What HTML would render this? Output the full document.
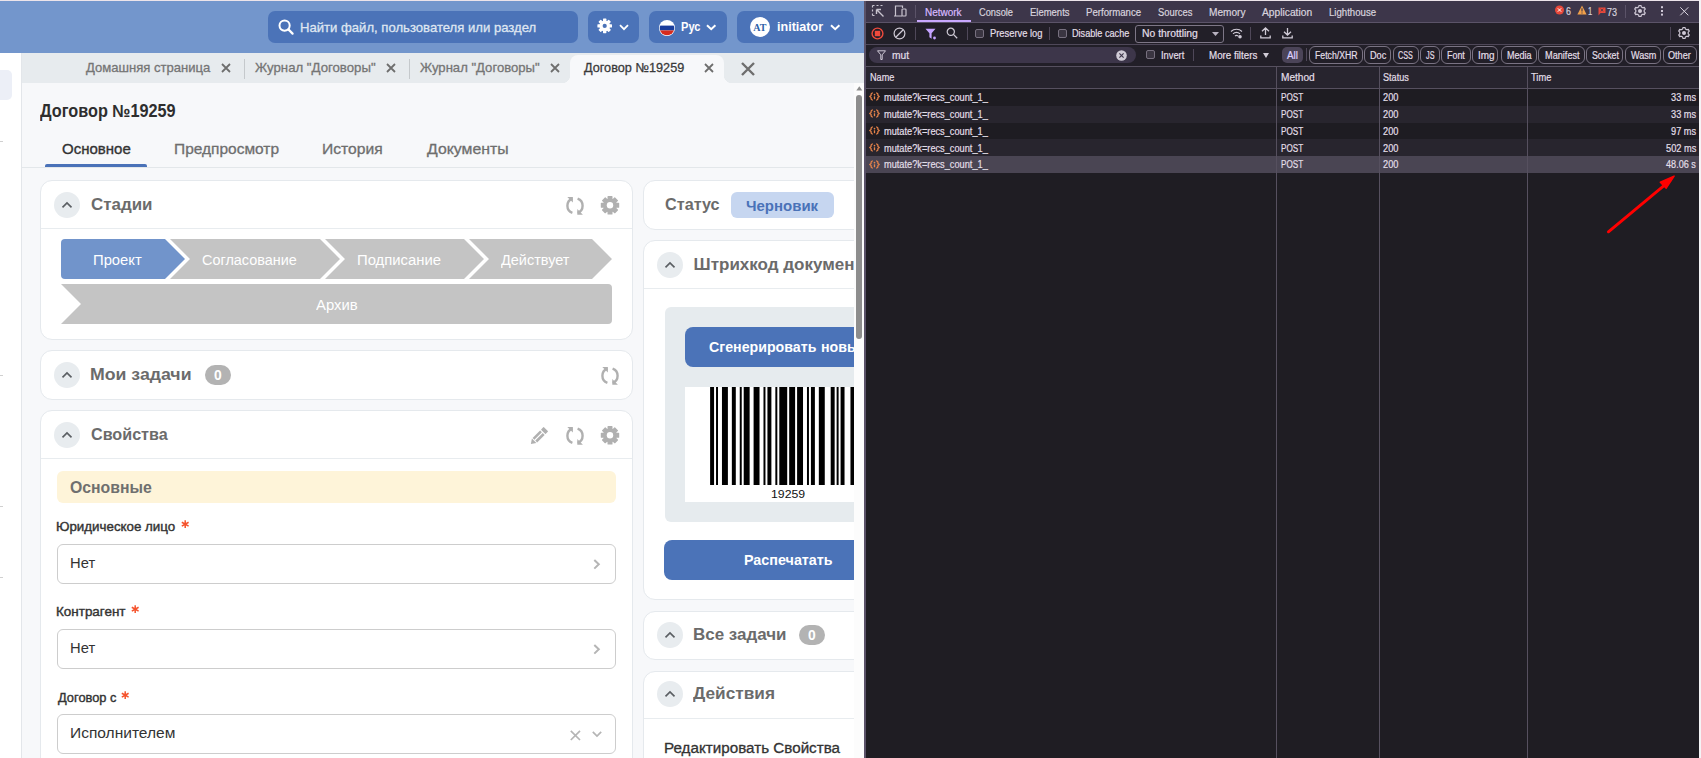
<!DOCTYPE html>
<html><head><meta charset="utf-8"><style>
html,body{margin:0;padding:0;width:1701px;height:758px;overflow:hidden;background:#1f1d24;font-family:"Liberation Sans", sans-serif;}
#root{position:relative;width:1701px;height:758px;overflow:hidden;}
</style></head><body><div id="root">
<div style="position:absolute;left:0px;top:0px;width:864px;height:1px;background:#ece4ea;border-radius:0px;box-sizing:border-box;"></div><div style="position:absolute;left:0px;top:1px;width:864px;height:52px;background:#7396cc;border-radius:0px;box-sizing:border-box;"></div><div style="position:absolute;left:268px;top:11px;width:310px;height:32px;background:#4b73b8;border-radius:7px;box-sizing:border-box;"></div><svg style="position:absolute;left:278px;top:19px;overflow:visible;" width="16" height="16" viewBox="0 0 16 16"><circle cx="6.6" cy="6.6" r="5.1" fill="none" stroke="#fff" stroke-width="2"/><path d="M10.4,10.4 L14.6,14.6" stroke="#fff" stroke-width="2.2" stroke-linecap="round"/></svg><div id="search" style="position:absolute;left:299.53px;top:21.01px;font-size:13.5px;line-height:13.5px;color:#dfe6f1;font-weight:400;letter-spacing:0.000px;white-space:nowrap;-webkit-text-stroke:0.3px #dfe6f1;transform:scaleX(0.9708);transform-origin:0 0;">Найти файл, пользователя или раздел</div><div style="position:absolute;left:588px;top:11px;width:51px;height:32px;background:#4b73b8;border-radius:7px;box-sizing:border-box;"></div><svg style="position:absolute;left:596px;top:17px;overflow:visible;" width="18" height="18" viewBox="0 0 18 18"><circle cx="8.7" cy="8.9" r="5.3" fill="#fff"/><rect x="6.999999999999999" y="1.6000000000000005" width="3.4" height="3.5" rx="0.6" fill="#fff" transform="rotate(0 8.7 8.9)"/><rect x="6.999999999999999" y="1.6000000000000005" width="3.4" height="3.5" rx="0.6" fill="#fff" transform="rotate(45 8.7 8.9)"/><rect x="6.999999999999999" y="1.6000000000000005" width="3.4" height="3.5" rx="0.6" fill="#fff" transform="rotate(90 8.7 8.9)"/><rect x="6.999999999999999" y="1.6000000000000005" width="3.4" height="3.5" rx="0.6" fill="#fff" transform="rotate(135 8.7 8.9)"/><rect x="6.999999999999999" y="1.6000000000000005" width="3.4" height="3.5" rx="0.6" fill="#fff" transform="rotate(180 8.7 8.9)"/><rect x="6.999999999999999" y="1.6000000000000005" width="3.4" height="3.5" rx="0.6" fill="#fff" transform="rotate(225 8.7 8.9)"/><rect x="6.999999999999999" y="1.6000000000000005" width="3.4" height="3.5" rx="0.6" fill="#fff" transform="rotate(270 8.7 8.9)"/><rect x="6.999999999999999" y="1.6000000000000005" width="3.4" height="3.5" rx="0.6" fill="#fff" transform="rotate(315 8.7 8.9)"/><circle cx="8.7" cy="8.9" r="2.1" fill="#4b73b8"/></svg><svg style="position:absolute;left:619px;top:24px;overflow:visible;" width="10" height="7" viewBox="0 0 10 7"><path d="M1,1.2 L5,5.2 L9,1.2" fill="none" stroke="#fff" stroke-width="1.8"/></svg><div style="position:absolute;left:649px;top:11px;width:78px;height:32px;background:#4b73b8;border-radius:7px;box-sizing:border-box;"></div><svg style="position:absolute;left:659px;top:20px;overflow:visible;" width="16" height="16" viewBox="0 0 16 16"><defs><clipPath id="fc"><circle cx="8" cy="8" r="7.3"/></clipPath></defs><circle cx="8" cy="8" r="8" fill="#fff"/><g clip-path="url(#fc)"><rect x="0" y="0" width="16" height="5.6" fill="#fff"/><rect x="0" y="5.6" width="16" height="4.8" fill="#1a3d9c"/><rect x="0" y="10.4" width="16" height="6" fill="#d52b1e"/></g></svg><div id="rus" style="position:absolute;left:681.0px;top:21.01px;font-size:12.5px;line-height:12.5px;color:#fff;font-weight:700;letter-spacing:0.000px;white-space:nowrap;transform:scaleX(0.8872);transform-origin:0 0;">Рус</div><svg style="position:absolute;left:706px;top:24px;overflow:visible;" width="11" height="7" viewBox="0 0 11 7"><path d="M1,1.2 L5.2,5.2 L9.4,1.2" fill="none" stroke="#fff" stroke-width="2"/></svg><div style="position:absolute;left:737px;top:11px;width:117px;height:32px;background:#4b73b8;border-radius:7px;box-sizing:border-box;"></div><div style="position:absolute;left:750px;top:17px;width:20px;height:20px;background:#fff;border-radius:10px;box-sizing:border-box;"></div><div id="at" style="position:absolute;left:753.2px;top:23.00px;font-size:10px;line-height:10px;color:#2d5fa8;font-weight:700;letter-spacing:0.000px;white-space:nowrap;font-family:'Liberation Serif', serif;">AT</div><div id="init" style="position:absolute;left:777.0px;top:20.00px;font-size:13px;line-height:13px;color:#fff;font-weight:700;letter-spacing:0.000px;white-space:nowrap;transform:scaleX(0.9663);transform-origin:0 0;">initiator</div><svg style="position:absolute;left:830px;top:24px;overflow:visible;" width="11" height="7" viewBox="0 0 11 7"><path d="M1,1.2 L5.2,5.2 L9.4,1.2" fill="none" stroke="#fff" stroke-width="2"/></svg><div style="position:absolute;left:0px;top:53px;width:21px;height:705px;background:#fff;border-radius:0px;box-sizing:border-box;"></div><div style="position:absolute;left:21px;top:53px;width:1px;height:705px;background:#e3e6ea;border-radius:0px;box-sizing:border-box;"></div><div style="position:absolute;left:0px;top:70px;width:12px;height:30px;background:#eceff7;border-radius:0 5px 5px 0;box-sizing:border-box;"></div><div style="position:absolute;left:0px;top:141px;width:3px;height:1px;background:#d0d0d0;border-radius:0px;box-sizing:border-box;"></div><div style="position:absolute;left:0px;top:375px;width:3px;height:1px;background:#d0d0d0;border-radius:0px;box-sizing:border-box;"></div><div style="position:absolute;left:0px;top:506px;width:3px;height:1px;background:#d0d0d0;border-radius:0px;box-sizing:border-box;"></div><div style="position:absolute;left:0px;top:577px;width:3px;height:1px;background:#d0d0d0;border-radius:0px;box-sizing:border-box;"></div><div style="position:absolute;left:22px;top:53px;width:842px;height:30px;background:#e7ebee;border-radius:0px;box-sizing:border-box;"></div><div style="position:absolute;left:22px;top:83px;width:832px;height:675px;background:#f7f8fa;border-radius:0px;box-sizing:border-box;"></div><div style="position:absolute;left:570px;top:55px;width:154px;height:28px;background:#f7f8fa;border-radius:8px 8px 0 0;box-sizing:border-box;"></div><div style="position:absolute;left:562px;top:75px;width:8px;height:8px;background:radial-gradient(circle at 0 0, #e7ebee 8px, #f7f8fa 8.5px);border-radius:0px;box-sizing:border-box;"></div><div style="position:absolute;left:724px;top:75px;width:8px;height:8px;background:radial-gradient(circle at 100% 0, #e7ebee 8px, #f7f8fa 8.5px);border-radius:0px;box-sizing:border-box;"></div><div id="tab1" style="position:absolute;left:86.0px;top:61.00px;font-size:13px;line-height:13px;color:#757575;font-weight:400;letter-spacing:0.000px;white-space:nowrap;-webkit-text-stroke:0.3px #757575;transform:scaleX(1.0052);transform-origin:0 0;">Домашняя страница</div><svg style="position:absolute;left:221px;top:63px;overflow:visible;" width="10" height="10" viewBox="0 0 10 10"><path d="M1,1 L9,9 M9,1 L1,9" stroke="#6e6e6e" stroke-width="1.8"/></svg><div style="position:absolute;left:244px;top:59px;width:1px;height:20px;background:#c5c9cc;border-radius:0px;box-sizing:border-box;"></div><div id="tab2" style="position:absolute;left:255.0px;top:61.00px;font-size:13px;line-height:13px;color:#757575;font-weight:400;letter-spacing:0.000px;white-space:nowrap;-webkit-text-stroke:0.3px #757575;transform:scaleX(1.0160);transform-origin:0 0;">Журнал "Договоры"</div><svg style="position:absolute;left:386px;top:63px;overflow:visible;" width="10" height="10" viewBox="0 0 10 10"><path d="M1,1 L9,9 M9,1 L1,9" stroke="#6e6e6e" stroke-width="1.8"/></svg><div style="position:absolute;left:409px;top:59px;width:1px;height:20px;background:#c5c9cc;border-radius:0px;box-sizing:border-box;"></div><div id="tab3" style="position:absolute;left:420.0px;top:61.00px;font-size:13px;line-height:13px;color:#757575;font-weight:400;letter-spacing:0.000px;white-space:nowrap;-webkit-text-stroke:0.3px #757575;transform:scaleX(1.0076);transform-origin:0 0;">Журнал "Договоры"</div><svg style="position:absolute;left:550px;top:63px;overflow:visible;" width="10" height="10" viewBox="0 0 10 10"><path d="M1,1 L9,9 M9,1 L1,9" stroke="#6e6e6e" stroke-width="1.8"/></svg><div id="tab4" style="position:absolute;left:584.0px;top:61.00px;font-size:13px;line-height:13px;color:#3a3a3a;font-weight:400;letter-spacing:0.000px;white-space:nowrap;-webkit-text-stroke:0.3px #3a3a3a;transform:scaleX(0.9750);transform-origin:0 0;">Договор №19259</div><svg style="position:absolute;left:704px;top:63px;overflow:visible;" width="10" height="10" viewBox="0 0 10 10"><path d="M1,1 L9,9 M9,1 L1,9" stroke="#6e6e6e" stroke-width="1.8"/></svg><svg style="position:absolute;left:740.5px;top:61.5px;overflow:visible;" width="14" height="14" viewBox="0 0 14 14"><path d="M1,1 L13,13 M13,1 L1,13" stroke="#6e6e6e" stroke-width="2.4"/></svg><div style="position:absolute;left:854px;top:83px;width:10px;height:675px;background:#fcfcfc;border-radius:0px;box-sizing:border-box;"></div><svg style="position:absolute;left:855.5px;top:85.5px;overflow:visible;" width="7" height="5" viewBox="0 0 7 5"><path d="M0.3,4.5 L3.3,0.3 L6.3,4.5 Z" fill="#8d8d8d"/></svg><div style="position:absolute;left:856px;top:95px;width:6px;height:244px;background:#8d8d8d;border-radius:3px;box-sizing:border-box;"></div><div style="position:absolute;left:0;top:0;width:854px;height:758px;overflow:hidden;"><div id="title" style="position:absolute;left:40.0px;top:103.00px;font-size:17.5px;line-height:17.5px;color:#2e2e2e;font-weight:700;letter-spacing:0.000px;white-space:nowrap;transform:scaleX(0.9288);transform-origin:0 0;">Договор №19259</div><div id="ptab1" style="position:absolute;left:61.6px;top:141.00px;font-size:15px;line-height:15px;color:#333;font-weight:400;letter-spacing:0.000px;white-space:nowrap;-webkit-text-stroke:0.35px #333;transform:scaleX(1.0002);transform-origin:0 0;">Основное</div><div id="ptab2" style="position:absolute;left:174.17px;top:141.00px;font-size:15px;line-height:15px;color:#6e6e6e;font-weight:400;letter-spacing:0.000px;white-space:nowrap;-webkit-text-stroke:0.3px #6e6e6e;transform:scaleX(1.0320);transform-origin:0 0;">Предпросмотр</div><div id="ptab3" style="position:absolute;left:321.96px;top:141.00px;font-size:15px;line-height:15px;color:#6e6e6e;font-weight:400;letter-spacing:0.000px;white-space:nowrap;-webkit-text-stroke:0.3px #6e6e6e;transform:scaleX(1.0430);transform-origin:0 0;">История</div><div id="ptab4" style="position:absolute;left:426.5px;top:141.00px;font-size:15px;line-height:15px;color:#6e6e6e;font-weight:400;letter-spacing:0.000px;white-space:nowrap;-webkit-text-stroke:0.3px #6e6e6e;transform:scaleX(1.0543);transform-origin:0 0;">Документы</div><div style="position:absolute;left:22px;top:167px;width:832px;height:1px;background:#e3e7ea;border-radius:0px;box-sizing:border-box;"></div><div style="position:absolute;left:45px;top:164px;width:102px;height:3px;background:#4a72b8;border-radius:2px 2px 0 0;box-sizing:border-box;"></div><div style="position:absolute;left:40px;top:180px;width:593px;height:160px;background:#fff;border-radius:12px;box-sizing:border-box;border:1px solid #e5e9ed;"></div><div style="position:absolute;left:54px;top:192px;width:26px;height:26px;background:#e8ecef;border-radius:13px;box-sizing:border-box;"></div><svg style="position:absolute;left:61px;top:201px;overflow:visible;" width="12" height="8" viewBox="0 0 12 8"><path d="M1.5,6.3 L6,2 L10.5,6.3" fill="none" stroke="#5b5f63" stroke-width="1.7"/></svg><div id="st_t" style="position:absolute;left:90.6px;top:196.01px;font-size:17px;line-height:17px;color:#6b6b6b;font-weight:700;letter-spacing:0.000px;white-space:nowrap;transform:scaleX(0.9951);transform-origin:0 0;">Стадии</div><svg style="position:absolute;left:565px;top:196px" width="20" height="20" viewBox="0 0 20 20"><path d="M7.4,2.66 A7.6,7.6 0 0 0 7.4,16.94" fill="none" stroke="#b0b0b0" stroke-width="2.4"/><path d="M12.6,2.66 A7.6,7.6 0 0 1 12.6,16.94" fill="none" stroke="#b0b0b0" stroke-width="2.4"/><path d="M2.3,1 L7.9,1 L7.9,6.6 Z" fill="#b0b0b0"/><path d="M12.3,18.7 L17.9,18.7 L12.3,13.1 Z" fill="#b0b0b0"/></svg><svg style="position:absolute;left:600px;top:195px;overflow:visible;" width="20" height="20" viewBox="0 0 20 20"><circle cx="10" cy="10.3" r="6.9" fill="#b0b0b0"/><rect x="7.5" y="1.1000000000000014" width="5" height="3.799999999999999" rx="0.6" fill="#b0b0b0" transform="rotate(0 10 10.3)"/><rect x="7.5" y="1.1000000000000014" width="5" height="3.799999999999999" rx="0.6" fill="#b0b0b0" transform="rotate(45 10 10.3)"/><rect x="7.5" y="1.1000000000000014" width="5" height="3.799999999999999" rx="0.6" fill="#b0b0b0" transform="rotate(90 10 10.3)"/><rect x="7.5" y="1.1000000000000014" width="5" height="3.799999999999999" rx="0.6" fill="#b0b0b0" transform="rotate(135 10 10.3)"/><rect x="7.5" y="1.1000000000000014" width="5" height="3.799999999999999" rx="0.6" fill="#b0b0b0" transform="rotate(180 10 10.3)"/><rect x="7.5" y="1.1000000000000014" width="5" height="3.799999999999999" rx="0.6" fill="#b0b0b0" transform="rotate(225 10 10.3)"/><rect x="7.5" y="1.1000000000000014" width="5" height="3.799999999999999" rx="0.6" fill="#b0b0b0" transform="rotate(270 10 10.3)"/><rect x="7.5" y="1.1000000000000014" width="5" height="3.799999999999999" rx="0.6" fill="#b0b0b0" transform="rotate(315 10 10.3)"/><circle cx="10" cy="10.3" r="3.2" fill="#fff"/></svg><div style="position:absolute;left:41px;top:228px;width:591px;height:1px;background:#e8ecef;border-radius:0px;box-sizing:border-box;"></div><svg style="position:absolute;left:0px;top:0px;overflow:visible;" width="854" height="340" viewBox="0 0 854 340"><path d="M65,239 L165,239 L185,259 L165,279 L65,279 Q61,279 61,275 L61,243 Q61,239 65,239 Z" fill="#7194cb"/><polygon points="170,239 320,239 340,259 320,279 170,279 190,259" fill="#c4c4c4"/><polygon points="325,239 464,239 484,259 464,279 325,279 345,259" fill="#c4c4c4"/><polygon points="469,239 592,239 612,259 592,279 469,279 489,259" fill="#c4c4c4"/><path d="M61,284 L608,284 Q612,284 612,288 L612,320 Q612,324 608,324 L61,324 L81,304 Z" fill="#c4c4c4"/></svg><div id="s1" style="position:absolute;left:92.64px;top:253.01px;font-size:14px;line-height:14px;color:#fff;font-weight:400;letter-spacing:0.000px;white-space:nowrap;transform:scaleX(1.0568);transform-origin:0 0;">Проект</div><div id="s2" style="position:absolute;left:202.0px;top:253.01px;font-size:14px;line-height:14px;color:#fff;font-weight:400;letter-spacing:0.000px;white-space:nowrap;transform:scaleX(1.0302);transform-origin:0 0;">Согласование</div><div id="s3" style="position:absolute;left:356.74px;top:253.01px;font-size:14px;line-height:14px;color:#fff;font-weight:400;letter-spacing:0.000px;white-space:nowrap;transform:scaleX(1.0606);transform-origin:0 0;">Подписание</div><div id="s4" style="position:absolute;left:501.0px;top:253.01px;font-size:14px;line-height:14px;color:#fff;font-weight:400;letter-spacing:0.000px;white-space:nowrap;transform:scaleX(1.0330);transform-origin:0 0;">Действует</div><div id="s5" style="position:absolute;left:316.0px;top:298.01px;font-size:14px;line-height:14px;color:#fff;font-weight:400;letter-spacing:0.000px;white-space:nowrap;transform:scaleX(1.0622);transform-origin:0 0;">Архив</div><div style="position:absolute;left:40px;top:350px;width:593px;height:50px;background:#fff;border-radius:12px;box-sizing:border-box;border:1px solid #e5e9ed;"></div><div style="position:absolute;left:54px;top:362px;width:26px;height:26px;background:#e8ecef;border-radius:13px;box-sizing:border-box;"></div><svg style="position:absolute;left:61px;top:371px;overflow:visible;" width="12" height="8" viewBox="0 0 12 8"><path d="M1.5,6.3 L6,2 L10.5,6.3" fill="none" stroke="#5b5f63" stroke-width="1.7"/></svg><div id="mt_t" style="position:absolute;left:89.66px;top:366.00px;font-size:17px;line-height:17px;color:#6b6b6b;font-weight:700;letter-spacing:0.000px;white-space:nowrap;transform:scaleX(1.0407);transform-origin:0 0;">Мои задачи</div><div style="position:absolute;left:205px;top:365px;width:26px;height:20px;background:#b3b3b3;border-radius:10px;box-sizing:border-box;"></div><div id="b1" style="position:absolute;left:213.6px;top:368.01px;font-size:14px;line-height:14px;color:#fff;font-weight:700;letter-spacing:0.000px;white-space:nowrap;transform:scaleX(0.9875);transform-origin:0 0;">0</div><svg style="position:absolute;left:600px;top:366px" width="20" height="20" viewBox="0 0 20 20"><path d="M7.4,2.66 A7.6,7.6 0 0 0 7.4,16.94" fill="none" stroke="#b0b0b0" stroke-width="2.4"/><path d="M12.6,2.66 A7.6,7.6 0 0 1 12.6,16.94" fill="none" stroke="#b0b0b0" stroke-width="2.4"/><path d="M2.3,1 L7.9,1 L7.9,6.6 Z" fill="#b0b0b0"/><path d="M12.3,18.7 L17.9,18.7 L12.3,13.1 Z" fill="#b0b0b0"/></svg><div style="position:absolute;left:40px;top:410px;width:593px;height:400px;background:#fff;border-radius:12px;box-sizing:border-box;border:1px solid #e5e9ed;"></div><div style="position:absolute;left:54px;top:422px;width:26px;height:26px;background:#e8ecef;border-radius:13px;box-sizing:border-box;"></div><svg style="position:absolute;left:61px;top:431px;overflow:visible;" width="12" height="8" viewBox="0 0 12 8"><path d="M1.5,6.3 L6,2 L10.5,6.3" fill="none" stroke="#5b5f63" stroke-width="1.7"/></svg><div id="pr_t" style="position:absolute;left:90.7px;top:426.00px;font-size:17px;line-height:17px;color:#6b6b6b;font-weight:700;letter-spacing:0.000px;white-space:nowrap;transform:scaleX(0.9490);transform-origin:0 0;">Свойства</div><svg style="position:absolute;left:0;top:0;overflow:visible" width="1" height="1"><g transform="translate(530.9,444.1) rotate(-45)" fill="#b0b0b0"><path d="M0,0 L4.6,-3.2 L4.6,3.2 Z"/><rect x="5.6" y="-3.2" width="10.6" height="2.55"/><rect x="5.6" y="0.65" width="10.6" height="2.55"/><rect x="17.4" y="-3.2" width="3.8" height="6.4" rx="0.5"/></g></svg><svg style="position:absolute;left:565px;top:426px" width="20" height="20" viewBox="0 0 20 20"><path d="M7.4,2.66 A7.6,7.6 0 0 0 7.4,16.94" fill="none" stroke="#b0b0b0" stroke-width="2.4"/><path d="M12.6,2.66 A7.6,7.6 0 0 1 12.6,16.94" fill="none" stroke="#b0b0b0" stroke-width="2.4"/><path d="M2.3,1 L7.9,1 L7.9,6.6 Z" fill="#b0b0b0"/><path d="M12.3,18.7 L17.9,18.7 L12.3,13.1 Z" fill="#b0b0b0"/></svg><svg style="position:absolute;left:600px;top:425px;overflow:visible;" width="20" height="20" viewBox="0 0 20 20"><circle cx="10" cy="10.3" r="6.9" fill="#b0b0b0"/><rect x="7.5" y="1.1000000000000014" width="5" height="3.799999999999999" rx="0.6" fill="#b0b0b0" transform="rotate(0 10 10.3)"/><rect x="7.5" y="1.1000000000000014" width="5" height="3.799999999999999" rx="0.6" fill="#b0b0b0" transform="rotate(45 10 10.3)"/><rect x="7.5" y="1.1000000000000014" width="5" height="3.799999999999999" rx="0.6" fill="#b0b0b0" transform="rotate(90 10 10.3)"/><rect x="7.5" y="1.1000000000000014" width="5" height="3.799999999999999" rx="0.6" fill="#b0b0b0" transform="rotate(135 10 10.3)"/><rect x="7.5" y="1.1000000000000014" width="5" height="3.799999999999999" rx="0.6" fill="#b0b0b0" transform="rotate(180 10 10.3)"/><rect x="7.5" y="1.1000000000000014" width="5" height="3.799999999999999" rx="0.6" fill="#b0b0b0" transform="rotate(225 10 10.3)"/><rect x="7.5" y="1.1000000000000014" width="5" height="3.799999999999999" rx="0.6" fill="#b0b0b0" transform="rotate(270 10 10.3)"/><rect x="7.5" y="1.1000000000000014" width="5" height="3.799999999999999" rx="0.6" fill="#b0b0b0" transform="rotate(315 10 10.3)"/><circle cx="10" cy="10.3" r="3.2" fill="#fff"/></svg><div style="position:absolute;left:41px;top:458px;width:591px;height:1px;background:#e8ecef;border-radius:0px;box-sizing:border-box;"></div><div style="position:absolute;left:57px;top:471px;width:559px;height:32px;background:#fef4d9;border-radius:6px;box-sizing:border-box;"></div><div id="osn" style="position:absolute;left:69.6px;top:480.00px;font-size:16px;line-height:16px;color:#6f6f6f;font-weight:700;letter-spacing:0.000px;white-space:nowrap;transform:scaleX(0.9874);transform-origin:0 0;">Основные</div><div id="lab_544" style="position:absolute;left:56.48px;top:520.00px;font-size:13px;line-height:13px;color:#333;font-weight:400;letter-spacing:0.000px;white-space:nowrap;-webkit-text-stroke:0.4px #333;transform:scaleX(1.0250);transform-origin:0 0;">Юридическое лицо</div><svg style="position:absolute;left:180.5px;top:519.7px;overflow:visible;" width="9" height="9" viewBox="0 0 9 9"><path d="M4.2,0.3 V8.1 M0.8,2.25 L7.6,6.15 M7.6,2.25 L0.8,6.15" stroke="#f5532d" stroke-width="1.5"/></svg><div style="position:absolute;left:57px;top:544px;width:559px;height:40px;background:#fff;border-radius:6px;box-sizing:border-box;border:1px solid #cdcdcd;"></div><div id="val_544" style="position:absolute;left:69.61999999999999px;top:555.00px;font-size:15px;line-height:15px;color:#333;font-weight:400;letter-spacing:0.000px;white-space:nowrap;transform:scaleX(0.9847);transform-origin:0 0;">Нет</div><svg style="position:absolute;left:593px;top:559px;overflow:visible;" width="8" height="11" viewBox="0 0 8 11"><path d="M1.3,1 L5.8,5.3 L1.3,9.6" fill="none" stroke="#b5b5b5" stroke-width="2"/></svg><div id="lab_629" style="position:absolute;left:56.47px;top:605.01px;font-size:13px;line-height:13px;color:#333;font-weight:400;letter-spacing:0.000px;white-space:nowrap;-webkit-text-stroke:0.4px #333;transform:scaleX(1.0338);transform-origin:0 0;">Контрагент</div><svg style="position:absolute;left:131.4px;top:604.9000000000001px;overflow:visible;" width="9" height="9" viewBox="0 0 9 9"><path d="M4.2,0.3 V8.1 M0.8,2.25 L7.6,6.15 M7.6,2.25 L0.8,6.15" stroke="#f5532d" stroke-width="1.5"/></svg><div style="position:absolute;left:57px;top:629px;width:559px;height:40px;background:#fff;border-radius:6px;box-sizing:border-box;border:1px solid #cdcdcd;"></div><div id="val_629" style="position:absolute;left:69.61999999999999px;top:640.00px;font-size:15px;line-height:15px;color:#333;font-weight:400;letter-spacing:0.000px;white-space:nowrap;transform:scaleX(0.9847);transform-origin:0 0;">Нет</div><svg style="position:absolute;left:593px;top:644px;overflow:visible;" width="8" height="11" viewBox="0 0 8 11"><path d="M1.3,1 L5.8,5.3 L1.3,9.6" fill="none" stroke="#b5b5b5" stroke-width="2"/></svg><div id="lab_714" style="position:absolute;left:57.5px;top:691.00px;font-size:13px;line-height:13px;color:#333;font-weight:400;letter-spacing:0.000px;white-space:nowrap;-webkit-text-stroke:0.4px #333;transform:scaleX(0.9883);transform-origin:0 0;">Договор с</div><svg style="position:absolute;left:121px;top:690.7px;overflow:visible;" width="9" height="9" viewBox="0 0 9 9"><path d="M4.2,0.3 V8.1 M0.8,2.25 L7.6,6.15 M7.6,2.25 L0.8,6.15" stroke="#f5532d" stroke-width="1.5"/></svg><div style="position:absolute;left:57px;top:714px;width:559px;height:40px;background:#fff;border-radius:6px;box-sizing:border-box;border:1px solid #cdcdcd;"></div><div id="val_714" style="position:absolute;left:69.55999999999999px;top:725.00px;font-size:15px;line-height:15px;color:#333;font-weight:400;letter-spacing:0.000px;white-space:nowrap;transform:scaleX(1.0351);transform-origin:0 0;">Исполнителем</div><svg style="position:absolute;left:570px;top:730px;overflow:visible;" width="11" height="11" viewBox="0 0 11 11"><path d="M0.8,0.8 L10,10 M10,0.8 L0.8,10" stroke="#b5b5b5" stroke-width="1.7"/></svg><svg style="position:absolute;left:592px;top:731px;overflow:visible;" width="11" height="7" viewBox="0 0 11 7"><path d="M0.8,0.8 L5,5 L9.2,0.8" fill="none" stroke="#b5b5b5" stroke-width="1.7"/></svg><div style="position:absolute;left:643px;top:180px;width:240px;height:50px;background:#fff;border-radius:12px;box-sizing:border-box;border:1px solid #e5e9ed;"></div><div id="stat" style="position:absolute;left:664.7px;top:196.00px;font-size:17px;line-height:17px;color:#6b6b6b;font-weight:700;letter-spacing:0.000px;white-space:nowrap;transform:scaleX(0.9536);transform-origin:0 0;">Статус</div><div style="position:absolute;left:731px;top:192px;width:103px;height:26px;background:#c6d6f0;border-radius:6px;box-sizing:border-box;"></div><div id="cher" style="position:absolute;left:746.4px;top:198.01px;font-size:15px;line-height:15px;color:#4a72b8;font-weight:700;letter-spacing:0.000px;white-space:nowrap;transform:scaleX(0.9985);transform-origin:0 0;">Черновик</div><div style="position:absolute;left:643px;top:240px;width:240px;height:360px;background:#fff;border-radius:12px;box-sizing:border-box;border:1px solid #e5e9ed;"></div><div style="position:absolute;left:657px;top:252px;width:26px;height:26px;background:#e8ecef;border-radius:13px;box-sizing:border-box;"></div><svg style="position:absolute;left:664px;top:261px;overflow:visible;" width="12" height="8" viewBox="0 0 12 8"><path d="M1.5,6.3 L6,2 L10.5,6.3" fill="none" stroke="#5b5f63" stroke-width="1.7"/></svg><div id="bc_t" style="position:absolute;left:693.6px;top:256.00px;font-size:17px;line-height:17px;color:#6b6b6b;font-weight:700;letter-spacing:0.000px;white-space:nowrap;">Штрихкод документа</div><div style="position:absolute;left:644px;top:288px;width:220px;height:1px;background:#e8ecef;border-radius:0px;box-sizing:border-box;"></div><div style="position:absolute;left:665px;top:307px;width:220px;height:215px;background:#e6ebee;border-radius:6px;box-sizing:border-box;"></div><div style="position:absolute;left:685px;top:327px;width:200px;height:40px;background:#4b73b8;border-radius:8px;box-sizing:border-box;"></div><div id="gen" style="position:absolute;left:709.4px;top:339.00px;font-size:15px;line-height:15px;color:#fff;font-weight:700;letter-spacing:0.000px;white-space:nowrap;transform:scaleX(0.9466);transform-origin:0 0;">Сгенерировать</div><div id="gen2" style="position:absolute;left:821.4px;top:339.00px;font-size:15px;line-height:15px;color:#fff;font-weight:700;letter-spacing:0.000px;white-space:nowrap;transform:scaleX(0.9466);transform-origin:0 0;">новый штрихкод</div><div style="position:absolute;left:685px;top:387px;width:200px;height:115px;background:#fff;border-radius:0px;box-sizing:border-box;"></div><svg style="position:absolute;left:0px;top:0px;overflow:visible;" width="854" height="600" viewBox="0 0 854 600"><rect x="710.100" y="387" width="3.954" height="98" fill="#000"/><rect x="716.031" y="387" width="1.977" height="98" fill="#000"/><rect x="721.962" y="387" width="5.931" height="98" fill="#000"/><rect x="731.847" y="387" width="3.954" height="98" fill="#000"/><rect x="739.755" y="387" width="1.977" height="98" fill="#000"/><rect x="743.709" y="387" width="5.931" height="98" fill="#000"/><rect x="753.594" y="387" width="5.931" height="98" fill="#000"/><rect x="763.479" y="387" width="1.977" height="98" fill="#000"/><rect x="767.433" y="387" width="3.954" height="98" fill="#000"/><rect x="775.341" y="387" width="1.977" height="98" fill="#000"/><rect x="779.295" y="387" width="7.908" height="98" fill="#000"/><rect x="789.180" y="387" width="5.931" height="98" fill="#000"/><rect x="797.088" y="387" width="5.931" height="98" fill="#000"/><rect x="806.973" y="387" width="1.977" height="98" fill="#000"/><rect x="810.927" y="387" width="3.954" height="98" fill="#000"/><rect x="818.835" y="387" width="5.931" height="98" fill="#000"/><rect x="830.697" y="387" width="3.954" height="98" fill="#000"/><rect x="836.628" y="387" width="1.977" height="98" fill="#000"/><rect x="840.582" y="387" width="3.954" height="98" fill="#000"/><rect x="850.467" y="387" width="5.931" height="98" fill="#000"/><rect x="858.375" y="387" width="1.977" height="98" fill="#000"/><rect x="862.329" y="387" width="3.954" height="98" fill="#000"/></svg><div id="bcn" style="position:absolute;left:770.6px;top:489.00px;font-size:11.5px;line-height:11.5px;color:#111;font-weight:400;letter-spacing:0.000px;white-space:nowrap;transform:scaleX(1.0670);transform-origin:0 0;">19259</div><div style="position:absolute;left:664px;top:540px;width:220px;height:40px;background:#4b73b8;border-radius:8px;box-sizing:border-box;"></div><div id="print" style="position:absolute;left:743.54px;top:552.01px;font-size:15px;line-height:15px;color:#fff;font-weight:700;letter-spacing:0.000px;white-space:nowrap;transform:scaleX(0.9552);transform-origin:0 0;">Распечатать</div><div style="position:absolute;left:643px;top:611px;width:240px;height:49px;background:#fff;border-radius:12px;box-sizing:border-box;border:1px solid #e5e9ed;"></div><div style="position:absolute;left:657px;top:622px;width:26px;height:26px;background:#e8ecef;border-radius:13px;box-sizing:border-box;"></div><svg style="position:absolute;left:664px;top:631px;overflow:visible;" width="12" height="8" viewBox="0 0 12 8"><path d="M1.5,6.3 L6,2 L10.5,6.3" fill="none" stroke="#5b5f63" stroke-width="1.7"/></svg><div id="at_t" style="position:absolute;left:692.8px;top:626.00px;font-size:17px;line-height:17px;color:#6b6b6b;font-weight:700;letter-spacing:0.000px;white-space:nowrap;transform:scaleX(0.9980);transform-origin:0 0;">Все задачи</div><div style="position:absolute;left:799px;top:625px;width:26px;height:20px;background:#b3b3b3;border-radius:10px;box-sizing:border-box;"></div><div id="b2" style="position:absolute;left:807.9px;top:628.01px;font-size:14px;line-height:14px;color:#fff;font-weight:700;letter-spacing:0.000px;white-space:nowrap;transform:scaleX(0.9875);transform-origin:0 0;">0</div><div style="position:absolute;left:643px;top:671px;width:240px;height:200px;background:#fff;border-radius:12px;box-sizing:border-box;border:1px solid #e5e9ed;"></div><div style="position:absolute;left:657px;top:681px;width:26px;height:26px;background:#e8ecef;border-radius:13px;box-sizing:border-box;"></div><svg style="position:absolute;left:664px;top:690px;overflow:visible;" width="12" height="8" viewBox="0 0 12 8"><path d="M1.5,6.3 L6,2 L10.5,6.3" fill="none" stroke="#5b5f63" stroke-width="1.7"/></svg><div id="act_t" style="position:absolute;left:693.0px;top:685.01px;font-size:17px;line-height:17px;color:#6b6b6b;font-weight:700;letter-spacing:0.000px;white-space:nowrap;transform:scaleX(1.0137);transform-origin:0 0;">Действия</div><div style="position:absolute;left:644px;top:718px;width:220px;height:1px;background:#e8ecef;border-radius:0px;box-sizing:border-box;"></div><div id="edit" style="position:absolute;left:663.91px;top:741.00px;font-size:14px;line-height:14px;color:#333;font-weight:400;letter-spacing:0.000px;white-space:nowrap;-webkit-text-stroke:0.3px #333;transform:scaleX(1.0863);transform-origin:0 0;">Редактировать Свойства</div></div><div style="position:absolute;left:864px;top:0px;width:837px;height:758px;background:#1f1d23;border-radius:0px;box-sizing:border-box;"></div><div style="position:absolute;left:864px;top:0px;width:837px;height:1px;background:#ece4ea;border-radius:0px;box-sizing:border-box;"></div><div style="position:absolute;left:864px;top:1px;width:1.5px;height:757px;background:#5a5268;border-radius:0px;box-sizing:border-box;"></div><div style="position:absolute;left:1699px;top:0px;width:2px;height:758px;background:#f4f4f6;border-radius:0px;box-sizing:border-box;"></div><div style="position:absolute;left:866px;top:1px;width:833px;height:21px;background:#3d364a;border-radius:0px;box-sizing:border-box;"></div><div style="position:absolute;left:866px;top:22px;width:833px;height:1px;background:#5b5368;border-radius:0px;box-sizing:border-box;"></div><div style="position:absolute;left:866px;top:23px;width:833px;height:21px;background:#221f28;border-radius:0px;box-sizing:border-box;"></div><div style="position:absolute;left:866px;top:44px;width:833px;height:1px;background:#4f4859;border-radius:0px;box-sizing:border-box;"></div><div style="position:absolute;left:866px;top:45px;width:833px;height:21px;background:#221f28;border-radius:0px;box-sizing:border-box;"></div><div style="position:absolute;left:866px;top:66px;width:833px;height:1px;background:#56505f;border-radius:0px;box-sizing:border-box;"></div><div style="position:absolute;left:866px;top:67px;width:833px;height:21px;background:#27242e;border-radius:0px;box-sizing:border-box;"></div><div style="position:absolute;left:866px;top:88.9px;width:833px;height:16.84px;background:#1e1c22;border-radius:0px;box-sizing:border-box;"></div><div style="position:absolute;left:866px;top:105.74000000000001px;width:833px;height:16.84px;background:#28252e;border-radius:0px;box-sizing:border-box;"></div><div style="position:absolute;left:866px;top:122.58000000000001px;width:833px;height:16.84px;background:#1e1c22;border-radius:0px;box-sizing:border-box;"></div><div style="position:absolute;left:866px;top:139.42000000000002px;width:833px;height:16.84px;background:#28252e;border-radius:0px;box-sizing:border-box;"></div><div style="position:absolute;left:866px;top:156.26px;width:833px;height:16.84px;background:#4a4553;border-radius:0px;box-sizing:border-box;"></div><div style="position:absolute;left:866px;top:88px;width:833px;height:1px;background:#56505f;border-radius:0px;box-sizing:border-box;"></div><div style="position:absolute;left:1276px;top:67px;width:1px;height:691px;background:#56505f;border-radius:0px;box-sizing:border-box;"></div><div style="position:absolute;left:1379px;top:67px;width:1px;height:691px;background:#56505f;border-radius:0px;box-sizing:border-box;"></div><div style="position:absolute;left:1527px;top:67px;width:1px;height:691px;background:#56505f;border-radius:0px;box-sizing:border-box;"></div><svg style="position:absolute;left:871px;top:4px;overflow:visible;" width="14" height="14" viewBox="0 0 14 14"><path d="M1.5,1.5 h2 M5.5,1.5 h2 M9.5,1.5 h2 M1.5,1.5 v2 M1.5,5.5 v2 M1.5,9.5 v2 M1.5,11.5 h2" stroke="#c9c4cf" stroke-width="1.2" fill="none"/><path d="M5.5,5.5 L12.5,12.5 M5.5,5.5 h4.5 M5.5,5.5 v4.5" stroke="#c9c4cf" stroke-width="1.4" fill="none"/></svg><svg style="position:absolute;left:893px;top:4px;overflow:visible;" width="14" height="14" viewBox="0 0 14 14"><path d="M1,12 h8 M2.5,12 V2 h7 v2" stroke="#c9c4cf" stroke-width="1.2" fill="none"/><rect x="9" y="5" width="4" height="7" rx="0.8" stroke="#c9c4cf" stroke-width="1.2" fill="none"/></svg><div style="position:absolute;left:915px;top:5px;width:1px;height:13px;background:#5b5368;border-radius:0px;box-sizing:border-box;"></div><div id="dt0" style="position:absolute;left:924.7px;top:8.00px;font-size:10.0px;line-height:10.0px;color:#d7b9ff;font-weight:400;letter-spacing:0.000px;white-space:nowrap;-webkit-text-stroke:0.2px #d7b9ff;transform:scaleX(0.9980);transform-origin:0 0;">Network</div><div id="dt1" style="position:absolute;left:978.5px;top:8.00px;font-size:10.0px;line-height:10.0px;color:#d8d3de;font-weight:400;letter-spacing:0.000px;white-space:nowrap;-webkit-text-stroke:0.2px #d8d3de;transform:scaleX(0.9265);transform-origin:0 0;">Console</div><div id="dt2" style="position:absolute;left:1030.0px;top:8.00px;font-size:10.0px;line-height:10.0px;color:#d8d3de;font-weight:400;letter-spacing:0.000px;white-space:nowrap;-webkit-text-stroke:0.2px #d8d3de;transform:scaleX(0.9476);transform-origin:0 0;">Elements</div><div id="dt3" style="position:absolute;left:1085.6px;top:8.00px;font-size:10.0px;line-height:10.0px;color:#d8d3de;font-weight:400;letter-spacing:0.000px;white-space:nowrap;-webkit-text-stroke:0.2px #d8d3de;transform:scaleX(0.9621);transform-origin:0 0;">Performance</div><div id="dt4" style="position:absolute;left:1157.6px;top:8.00px;font-size:10.0px;line-height:10.0px;color:#d8d3de;font-weight:400;letter-spacing:0.000px;white-space:nowrap;-webkit-text-stroke:0.2px #d8d3de;transform:scaleX(0.9377);transform-origin:0 0;">Sources</div><div id="dt5" style="position:absolute;left:1208.5px;top:8.00px;font-size:10.0px;line-height:10.0px;color:#d8d3de;font-weight:400;letter-spacing:0.000px;white-space:nowrap;-webkit-text-stroke:0.2px #d8d3de;transform:scaleX(1.0107);transform-origin:0 0;">Memory</div><div id="dt6" style="position:absolute;left:1262.0px;top:8.00px;font-size:10.0px;line-height:10.0px;color:#d8d3de;font-weight:400;letter-spacing:0.000px;white-space:nowrap;-webkit-text-stroke:0.2px #d8d3de;transform:scaleX(1.0236);transform-origin:0 0;">Application</div><div id="dt7" style="position:absolute;left:1328.5px;top:8.00px;font-size:10.0px;line-height:10.0px;color:#d8d3de;font-weight:400;letter-spacing:0.000px;white-space:nowrap;-webkit-text-stroke:0.2px #d8d3de;transform:scaleX(0.9621);transform-origin:0 0;">Lighthouse</div><div style="position:absolute;left:917px;top:20px;width:54px;height:2px;background:#c9a8ff;border-radius:0px;box-sizing:border-box;"></div><svg style="position:absolute;left:1555px;top:5px;overflow:visible;" width="9" height="10" viewBox="0 0 9 10"><circle cx="4.5" cy="5" r="4.5" fill="#e8483a"/><path d="M2.8,3.3 L6.2,6.7 M6.2,3.3 L2.8,6.7" stroke="#fff" stroke-width="1"/></svg><div id="c6" style="position:absolute;left:1565.7px;top:7.01px;font-size:10px;line-height:10px;color:#d8d3de;font-weight:400;letter-spacing:0.000px;white-space:nowrap;-webkit-text-stroke:0.2px #d8d3de;transform:scaleX(0.8833);transform-origin:0 0;">6</div><svg style="position:absolute;left:1577px;top:5px;overflow:visible;" width="10" height="10" viewBox="0 0 10 10"><path d="M5,0.5 L9.6,9.5 L0.4,9.5 Z" fill="#f0a04b"/><path d="M5,3.3 V6.4 M5,7.4 V8.4" stroke="#3d364a" stroke-width="1.1"/></svg><div id="c1" style="position:absolute;left:1588.0px;top:7.01px;font-size:10px;line-height:10px;color:#d8d3de;font-weight:400;letter-spacing:0.000px;white-space:nowrap;-webkit-text-stroke:0.2px #d8d3de;transform:scaleX(0.7500);transform-origin:0 0;">1</div><svg style="position:absolute;left:1597.5px;top:7px;overflow:visible;" width="8" height="9" viewBox="0 0 8 9"><path d="M0.5,0.5 H7.5 V6 H2.5 L0.5,8.5 Z" fill="#e8483a"/><path d="M2.7,1.8 L5.3,4.4 M5.3,1.8 L2.7,4.4" stroke="#3d364a" stroke-width="0.8"/></svg><div id="c73" style="position:absolute;left:1607.4px;top:8.01px;font-size:10px;line-height:10px;color:#d8d3de;font-weight:400;letter-spacing:0.000px;white-space:nowrap;-webkit-text-stroke:0.2px #d8d3de;transform:scaleX(0.8995);transform-origin:0 0;">73</div><div style="position:absolute;left:1625px;top:5px;width:1px;height:13px;background:#5b5368;border-radius:0px;box-sizing:border-box;"></div><svg style="position:absolute;left:1632px;top:3px;overflow:visible;" width="16" height="16" viewBox="0 0 16 16"><path d="M6.67,3.91 L7.01,2.49 L8.99,2.49 L9.33,3.91 L10.88,4.80 L12.28,4.39 L13.27,6.10 L12.21,7.11 L12.21,8.89 L13.27,9.90 L12.28,11.61 L10.88,11.20 L9.33,12.09 L8.99,13.51 L7.01,13.51 L6.67,12.09 L5.12,11.20 L3.72,11.61 L2.73,9.90 L3.79,8.89 L3.79,7.11 L2.73,6.10 L3.72,4.39 L5.12,4.80 Z" fill="none" stroke="#cfc9d6" stroke-width="1.2" stroke-linejoin="round"/><circle cx="8" cy="8" r="2" fill="#cfc9d6"/></svg><svg style="position:absolute;left:1660px;top:6px;overflow:visible;" width="4" height="11" viewBox="0 0 4 11"><rect x="1" y="0.2" width="2" height="2" fill="#cfc9d6"/><rect x="1" y="4" width="2" height="2" fill="#cfc9d6"/><rect x="1" y="7.6" width="2" height="2" fill="#cfc9d6"/></svg><svg style="position:absolute;left:1680px;top:7px;overflow:visible;" width="9" height="9" viewBox="0 0 9 9"><path d="M0.3,0.3 L8.3,8.3 M8.3,0.3 L0.3,8.3" stroke="#d8d3de" stroke-width="1"/></svg><svg style="position:absolute;left:871px;top:27px;overflow:visible;" width="13" height="13" viewBox="0 0 13 13"><circle cx="6.5" cy="6.5" r="5.4" fill="none" stroke="#ef4a3c" stroke-width="1.4"/><rect x="3.8" y="3.8" width="5.4" height="5.4" fill="#ef4a3c"/></svg><svg style="position:absolute;left:893px;top:27px;overflow:visible;" width="13" height="13" viewBox="0 0 13 13"><circle cx="6.5" cy="6.5" r="5.4" fill="none" stroke="#d0cbd6" stroke-width="1.2"/><path d="M3,10 L10,3" stroke="#d0cbd6" stroke-width="1.2"/></svg><div style="position:absolute;left:915px;top:27px;width:1px;height:13px;background:#4f4859;border-radius:0px;box-sizing:border-box;"></div><svg style="position:absolute;left:925px;top:28px;overflow:visible;" width="12" height="12" viewBox="0 0 12 12"><path d="M0.5,0.8 H10.5 L6.6,5.2 V10.8 L4.4,9.3 V5.2 Z" fill="#c5a3ff"/><circle cx="9.5" cy="10" r="1.4" fill="#c5a3ff"/></svg><svg style="position:absolute;left:946px;top:27px;overflow:visible;" width="12" height="12" viewBox="0 0 12 12"><circle cx="4.8" cy="4.8" r="3.6" fill="none" stroke="#d0cbd6" stroke-width="1.2"/><path d="M7.4,7.4 L11.2,11.2" stroke="#d0cbd6" stroke-width="1.3"/></svg><div style="position:absolute;left:967px;top:27px;width:1px;height:13px;background:#4f4859;border-radius:0px;box-sizing:border-box;"></div><div style="position:absolute;left:975px;top:29px;width:9px;height:9px;background:#3a3541;border-radius:2px;box-sizing:border-box;border:1px solid #77707f;"></div><div id="pl" style="position:absolute;left:990.0px;top:29.00px;font-size:10.0px;line-height:10.0px;color:#e2dfe7;font-weight:400;letter-spacing:0.000px;white-space:nowrap;-webkit-text-stroke:0.2px #e2dfe7;transform:scaleX(0.9357);transform-origin:0 0;">Preserve log</div><div style="position:absolute;left:1049px;top:27px;width:1px;height:13px;background:#4f4859;border-radius:0px;box-sizing:border-box;"></div><div style="position:absolute;left:1058px;top:29px;width:9px;height:9px;background:#3a3541;border-radius:2px;box-sizing:border-box;border:1px solid #77707f;"></div><div id="dc" style="position:absolute;left:1072.3px;top:29.00px;font-size:10.0px;line-height:10.0px;color:#e2dfe7;font-weight:400;letter-spacing:0.000px;white-space:nowrap;-webkit-text-stroke:0.2px #e2dfe7;transform:scaleX(0.9122);transform-origin:0 0;">Disable cache</div><div style="position:absolute;left:1134.5px;top:24.5px;width:89px;height:18px;background:transparent;border-radius:3px;box-sizing:border-box;border:1px solid #7d7686;"></div><div id="nt" style="position:absolute;left:1141.7px;top:29.00px;font-size:10.0px;line-height:10.0px;color:#e2dfe7;font-weight:400;letter-spacing:0.000px;white-space:nowrap;-webkit-text-stroke:0.2px #e2dfe7;transform:scaleX(1.0365);transform-origin:0 0;">No throttling</div><svg style="position:absolute;left:1212px;top:32px;overflow:visible;" width="7" height="5" viewBox="0 0 7 5"><path d="M0,0 H7 L3.5,4 Z" fill="#b8b2c0"/></svg><svg style="position:absolute;left:1230px;top:27px;overflow:visible;" width="13" height="12" viewBox="0 0 13 12"><path d="M1,4.5 A8,8 0 0 1 12,4.5 M3,6.8 A5,5 0 0 1 10,6.8 M5,9 A2.2,2.2 0 0 1 8,9" fill="none" stroke="#d0cbd6" stroke-width="1.1"/><circle cx="10" cy="9.8" r="1.8" fill="#d0cbd6"/></svg><div style="position:absolute;left:1250px;top:27px;width:1px;height:13px;background:#4f4859;border-radius:0px;box-sizing:border-box;"></div><svg style="position:absolute;left:1260px;top:27px;overflow:visible;" width="11" height="12" viewBox="0 0 11 12"><path d="M5.5,1 V8 M2,4.3 L5.5,1 L9,4.3 M0.8,8.5 V10.8 H10.2 V8.5" fill="none" stroke="#d0cbd6" stroke-width="1.3"/></svg><svg style="position:absolute;left:1282px;top:27px;overflow:visible;" width="11" height="12" viewBox="0 0 11 12"><path d="M5.5,1 V8 M2,4.7 L5.5,8 L9,4.7 M0.8,8.5 V10.8 H10.2 V8.5" fill="none" stroke="#d0cbd6" stroke-width="1.3"/></svg><div style="position:absolute;left:1670px;top:27px;width:1px;height:13px;background:#4f4859;border-radius:0px;box-sizing:border-box;"></div><svg style="position:absolute;left:1676px;top:25px;overflow:visible;" width="16" height="16" viewBox="0 0 16 16"><path d="M6.67,3.91 L7.01,2.49 L8.99,2.49 L9.33,3.91 L10.88,4.80 L12.28,4.39 L13.27,6.10 L12.21,7.11 L12.21,8.89 L13.27,9.90 L12.28,11.61 L10.88,11.20 L9.33,12.09 L8.99,13.51 L7.01,13.51 L6.67,12.09 L5.12,11.20 L3.72,11.61 L2.73,9.90 L3.79,8.89 L3.79,7.11 L2.73,6.10 L3.72,4.39 L5.12,4.80 Z" fill="none" stroke="#cfc9d6" stroke-width="1.2" stroke-linejoin="round"/><circle cx="8" cy="8" r="2" fill="#cfc9d6"/></svg><div style="position:absolute;left:869px;top:47px;width:267px;height:16px;background:#3d364a;border-radius:8px;box-sizing:border-box;"></div><svg style="position:absolute;left:877px;top:50px;overflow:visible;" width="9" height="10" viewBox="0 0 9 10"><path d="M0.5,0.8 H8.5 L5.2,4.8 V9.5 H3.8 V4.8 Z" fill="none" stroke="#cfc9d6" stroke-width="1"/></svg><div id="mut" style="position:absolute;left:891.5px;top:51.01px;font-size:10.0px;line-height:10.0px;color:#e2dfe7;font-weight:400;letter-spacing:0.000px;white-space:nowrap;-webkit-text-stroke:0.2px #e2dfe7;transform:scaleX(1.0242);transform-origin:0 0;">mut</div><svg style="position:absolute;left:1116px;top:50px;overflow:visible;" width="11" height="11" viewBox="0 0 11 11"><circle cx="5.5" cy="5.5" r="5.3" fill="#d0cbd6"/><path d="M3.4,3.4 L7.6,7.6 M7.6,3.4 L3.4,7.6" stroke="#3d364a" stroke-width="1.1"/></svg><div style="position:absolute;left:1146px;top:50px;width:9px;height:9px;background:#3a3541;border-radius:2px;box-sizing:border-box;border:1px solid #77707f;"></div><div id="inv" style="position:absolute;left:1160.5px;top:51.00px;font-size:10.0px;line-height:10.0px;color:#e2dfe7;font-weight:400;letter-spacing:0.000px;white-space:nowrap;-webkit-text-stroke:0.2px #e2dfe7;transform:scaleX(0.9314);transform-origin:0 0;">Invert</div><div style="position:absolute;left:1193px;top:49px;width:1px;height:12px;background:#4f4859;border-radius:0px;box-sizing:border-box;"></div><div id="mf" style="position:absolute;left:1208.7px;top:51.00px;font-size:10.0px;line-height:10.0px;color:#e2dfe7;font-weight:400;letter-spacing:0.000px;white-space:nowrap;-webkit-text-stroke:0.2px #e2dfe7;transform:scaleX(0.9767);transform-origin:0 0;">More filters</div><svg style="position:absolute;left:1262.5px;top:53px;overflow:visible;" width="6" height="5" viewBox="0 0 6 5"><path d="M0,0 H6 L3,5 Z" fill="#d0cbd6"/></svg><div style="position:absolute;left:1282px;top:47px;width:21px;height:15.5px;background:#4b4458;border-radius:5px;box-sizing:border-box;"></div><div id="ch_all" style="position:absolute;left:1287.0px;top:51.00px;font-size:10.0px;line-height:10.0px;color:#ddd0ff;font-weight:400;letter-spacing:0.000px;white-space:nowrap;-webkit-text-stroke:0.2px #ddd0ff;transform:scaleX(0.9824);transform-origin:0 0;">All</div><div style="position:absolute;left:1306px;top:48px;width:1px;height:13px;background:#4f4859;border-radius:0px;box-sizing:border-box;"></div><div style="position:absolute;left:1309.3px;top:46.3px;width:53.299999999999955px;height:17.5px;background:transparent;border-radius:6px;box-sizing:border-box;border:1px solid #7a7383;"></div><div id="chip0" style="position:absolute;left:1314.7px;top:51.00px;font-size:10.0px;line-height:10.0px;color:#e2dfe7;font-weight:400;letter-spacing:0.000px;white-space:nowrap;-webkit-text-stroke:0.2px #e2dfe7;transform:scaleX(0.8689);transform-origin:0 0;">Fetch/XHR</div><div style="position:absolute;left:1364px;top:46.3px;width:26.700000000000045px;height:17.5px;background:transparent;border-radius:6px;box-sizing:border-box;border:1px solid #7a7383;"></div><div id="chip1" style="position:absolute;left:1369.6px;top:51.00px;font-size:10.0px;line-height:10.0px;color:#e2dfe7;font-weight:400;letter-spacing:0.000px;white-space:nowrap;-webkit-text-stroke:0.2px #e2dfe7;transform:scaleX(0.9110);transform-origin:0 0;">Doc</div><div style="position:absolute;left:1393px;top:46.3px;width:25.799999999999955px;height:17.5px;background:transparent;border-radius:6px;box-sizing:border-box;border:1px solid #7a7383;"></div><div id="chip2" style="position:absolute;left:1398.2px;top:51.00px;font-size:10.0px;line-height:10.0px;color:#e2dfe7;font-weight:400;letter-spacing:0.000px;white-space:nowrap;-webkit-text-stroke:0.2px #e2dfe7;transform:scaleX(0.7180);transform-origin:0 0;">CSS</div><div style="position:absolute;left:1420px;top:46.3px;width:19.700000000000045px;height:17.5px;background:transparent;border-radius:6px;box-sizing:border-box;border:1px solid #7a7383;"></div><div id="chip3" style="position:absolute;left:1426.0px;top:51.00px;font-size:10.0px;line-height:10.0px;color:#e2dfe7;font-weight:400;letter-spacing:0.000px;white-space:nowrap;-webkit-text-stroke:0.2px #e2dfe7;transform:scaleX(0.7250);transform-origin:0 0;">JS</div><div style="position:absolute;left:1441px;top:46.3px;width:29.799999999999955px;height:17.5px;background:transparent;border-radius:6px;box-sizing:border-box;border:1px solid #7a7383;"></div><div id="chip4" style="position:absolute;left:1447.3px;top:51.00px;font-size:10.0px;line-height:10.0px;color:#e2dfe7;font-weight:400;letter-spacing:0.000px;white-space:nowrap;-webkit-text-stroke:0.2px #e2dfe7;transform:scaleX(0.8897);transform-origin:0 0;">Font</div><div style="position:absolute;left:1472.3px;top:46.3px;width:26.200000000000045px;height:17.5px;background:transparent;border-radius:6px;box-sizing:border-box;border:1px solid #7a7383;"></div><div id="chip5" style="position:absolute;left:1477.9px;top:51.00px;font-size:10.0px;line-height:10.0px;color:#e2dfe7;font-weight:400;letter-spacing:0.000px;white-space:nowrap;-webkit-text-stroke:0.2px #e2dfe7;transform:scaleX(0.9933);transform-origin:0 0;">Img</div><div style="position:absolute;left:1501px;top:46.3px;width:36px;height:17.5px;background:transparent;border-radius:6px;box-sizing:border-box;border:1px solid #7a7383;"></div><div id="chip6" style="position:absolute;left:1506.8px;top:51.00px;font-size:10.0px;line-height:10.0px;color:#e2dfe7;font-weight:400;letter-spacing:0.000px;white-space:nowrap;-webkit-text-stroke:0.2px #e2dfe7;transform:scaleX(0.9033);transform-origin:0 0;">Media</div><div style="position:absolute;left:1538px;top:46.3px;width:46.5px;height:17.5px;background:transparent;border-radius:6px;box-sizing:border-box;border:1px solid #7a7383;"></div><div id="chip7" style="position:absolute;left:1544.5px;top:51.00px;font-size:10.0px;line-height:10.0px;color:#e2dfe7;font-weight:400;letter-spacing:0.000px;white-space:nowrap;-webkit-text-stroke:0.2px #e2dfe7;transform:scaleX(0.9154);transform-origin:0 0;">Manifest</div><div style="position:absolute;left:1586.4px;top:46.3px;width:37.09999999999991px;height:17.5px;background:transparent;border-radius:6px;box-sizing:border-box;border:1px solid #7a7383;"></div><div id="chip8" style="position:absolute;left:1591.9px;top:51.00px;font-size:10.0px;line-height:10.0px;color:#e2dfe7;font-weight:400;letter-spacing:0.000px;white-space:nowrap;-webkit-text-stroke:0.2px #e2dfe7;transform:scaleX(0.8801);transform-origin:0 0;">Socket</div><div style="position:absolute;left:1625.2px;top:46.3px;width:35.5px;height:17.5px;background:transparent;border-radius:6px;box-sizing:border-box;border:1px solid #7a7383;"></div><div id="chip9" style="position:absolute;left:1631.0px;top:51.00px;font-size:10.0px;line-height:10.0px;color:#e2dfe7;font-weight:400;letter-spacing:0.000px;white-space:nowrap;-webkit-text-stroke:0.2px #e2dfe7;transform:scaleX(0.9048);transform-origin:0 0;">Wasm</div><div style="position:absolute;left:1663px;top:46.3px;width:33.59999999999991px;height:17.5px;background:transparent;border-radius:6px;box-sizing:border-box;border:1px solid #7a7383;"></div><div id="chip10" style="position:absolute;left:1668.0px;top:51.00px;font-size:10.0px;line-height:10.0px;color:#e2dfe7;font-weight:400;letter-spacing:0.000px;white-space:nowrap;-webkit-text-stroke:0.2px #e2dfe7;transform:scaleX(0.9112);transform-origin:0 0;">Other</div><div id="hn" style="position:absolute;left:869.8px;top:73.00px;font-size:10.0px;line-height:10.0px;color:#e2dfe7;font-weight:400;letter-spacing:0.000px;white-space:nowrap;-webkit-text-stroke:0.2px #e2dfe7;transform:scaleX(0.9110);transform-origin:0 0;">Name</div><div id="hm" style="position:absolute;left:1280.9px;top:73.00px;font-size:10.0px;line-height:10.0px;color:#e2dfe7;font-weight:400;letter-spacing:0.000px;white-space:nowrap;-webkit-text-stroke:0.2px #e2dfe7;transform:scaleX(1.0094);transform-origin:0 0;">Method</div><div id="hs" style="position:absolute;left:1383.0px;top:73.00px;font-size:10.0px;line-height:10.0px;color:#e2dfe7;font-weight:400;letter-spacing:0.000px;white-space:nowrap;-webkit-text-stroke:0.2px #e2dfe7;transform:scaleX(0.9101);transform-origin:0 0;">Status</div><div id="ht" style="position:absolute;left:1531.3px;top:73.00px;font-size:10.0px;line-height:10.0px;color:#e2dfe7;font-weight:400;letter-spacing:0.000px;white-space:nowrap;-webkit-text-stroke:0.2px #e2dfe7;transform:scaleX(0.9287);transform-origin:0 0;">Time</div><svg style="position:absolute;left:868.8px;top:92.19999999999999px;overflow:visible;" width="11" height="10" viewBox="0 0 11 10"><path d="M3.7,0.6 L2.1,2 L2.1,3.5 L0.7,4.5 L2.1,5.5 L2.1,7 L3.7,8.4 M7.3,0.6 L8.9,2 L8.9,3.5 L10.3,4.5 L8.9,5.5 L8.9,7 L7.3,8.4" fill="none" stroke="#e8844a" stroke-width="1.2" stroke-linejoin="round"/><circle cx="5.5" cy="2.6" r="0.85" fill="#e8844a"/><path d="M5.5,4.3 V7.2" stroke="#e8844a" stroke-width="1.3"/></svg><div id="rn0" style="position:absolute;left:883.8px;top:93.01px;font-size:10.0px;line-height:10.0px;color:#e2dfe7;font-weight:400;letter-spacing:0.000px;white-space:nowrap;-webkit-text-stroke:0.2px #e2dfe7;transform:scaleX(0.9220);transform-origin:0 0;">mutate?k=recs_count_1_</div><div id="rm0" style="position:absolute;left:1280.9px;top:93.01px;font-size:10.0px;line-height:10.0px;color:#e2dfe7;font-weight:400;letter-spacing:0.000px;white-space:nowrap;-webkit-text-stroke:0.2px #e2dfe7;transform:scaleX(0.8150);transform-origin:0 0;">POST</div><div id="rs0" style="position:absolute;left:1383.0px;top:93.01px;font-size:10.0px;line-height:10.0px;color:#e2dfe7;font-weight:400;letter-spacing:0.000px;white-space:nowrap;-webkit-text-stroke:0.2px #e2dfe7;transform:scaleX(0.9227);transform-origin:0 0;">200</div><div id="rt0" style="position:absolute;left:1671.0px;top:93.01px;font-size:10.0px;line-height:10.0px;color:#e2dfe7;font-weight:400;letter-spacing:0.000px;white-space:nowrap;-webkit-text-stroke:0.2px #e2dfe7;transform:scaleX(0.9217);transform-origin:0 0;">33 ms</div><svg style="position:absolute;left:868.8px;top:109.03999999999999px;overflow:visible;" width="11" height="10" viewBox="0 0 11 10"><path d="M3.7,0.6 L2.1,2 L2.1,3.5 L0.7,4.5 L2.1,5.5 L2.1,7 L3.7,8.4 M7.3,0.6 L8.9,2 L8.9,3.5 L10.3,4.5 L8.9,5.5 L8.9,7 L7.3,8.4" fill="none" stroke="#e8844a" stroke-width="1.2" stroke-linejoin="round"/><circle cx="5.5" cy="2.6" r="0.85" fill="#e8844a"/><path d="M5.5,4.3 V7.2" stroke="#e8844a" stroke-width="1.3"/></svg><div id="rn1" style="position:absolute;left:883.8px;top:110.01px;font-size:10.0px;line-height:10.0px;color:#e2dfe7;font-weight:400;letter-spacing:0.000px;white-space:nowrap;-webkit-text-stroke:0.2px #e2dfe7;transform:scaleX(0.9220);transform-origin:0 0;">mutate?k=recs_count_1_</div><div id="rm1" style="position:absolute;left:1280.9px;top:110.01px;font-size:10.0px;line-height:10.0px;color:#e2dfe7;font-weight:400;letter-spacing:0.000px;white-space:nowrap;-webkit-text-stroke:0.2px #e2dfe7;transform:scaleX(0.8150);transform-origin:0 0;">POST</div><div id="rs1" style="position:absolute;left:1383.0px;top:110.01px;font-size:10.0px;line-height:10.0px;color:#e2dfe7;font-weight:400;letter-spacing:0.000px;white-space:nowrap;-webkit-text-stroke:0.2px #e2dfe7;transform:scaleX(0.9227);transform-origin:0 0;">200</div><div id="rt1" style="position:absolute;left:1671.0px;top:110.01px;font-size:10.0px;line-height:10.0px;color:#e2dfe7;font-weight:400;letter-spacing:0.000px;white-space:nowrap;-webkit-text-stroke:0.2px #e2dfe7;transform:scaleX(0.9217);transform-origin:0 0;">33 ms</div><svg style="position:absolute;left:868.8px;top:125.88px;overflow:visible;" width="11" height="10" viewBox="0 0 11 10"><path d="M3.7,0.6 L2.1,2 L2.1,3.5 L0.7,4.5 L2.1,5.5 L2.1,7 L3.7,8.4 M7.3,0.6 L8.9,2 L8.9,3.5 L10.3,4.5 L8.9,5.5 L8.9,7 L7.3,8.4" fill="none" stroke="#e8844a" stroke-width="1.2" stroke-linejoin="round"/><circle cx="5.5" cy="2.6" r="0.85" fill="#e8844a"/><path d="M5.5,4.3 V7.2" stroke="#e8844a" stroke-width="1.3"/></svg><div id="rn2" style="position:absolute;left:883.8px;top:127.00px;font-size:10.0px;line-height:10.0px;color:#e2dfe7;font-weight:400;letter-spacing:0.000px;white-space:nowrap;-webkit-text-stroke:0.2px #e2dfe7;transform:scaleX(0.9220);transform-origin:0 0;">mutate?k=recs_count_1_</div><div id="rm2" style="position:absolute;left:1280.9px;top:127.00px;font-size:10.0px;line-height:10.0px;color:#e2dfe7;font-weight:400;letter-spacing:0.000px;white-space:nowrap;-webkit-text-stroke:0.2px #e2dfe7;transform:scaleX(0.8150);transform-origin:0 0;">POST</div><div id="rs2" style="position:absolute;left:1383.0px;top:127.00px;font-size:10.0px;line-height:10.0px;color:#e2dfe7;font-weight:400;letter-spacing:0.000px;white-space:nowrap;-webkit-text-stroke:0.2px #e2dfe7;transform:scaleX(0.9227);transform-origin:0 0;">200</div><div id="rt2" style="position:absolute;left:1671.0px;top:127.00px;font-size:10.0px;line-height:10.0px;color:#e2dfe7;font-weight:400;letter-spacing:0.000px;white-space:nowrap;-webkit-text-stroke:0.2px #e2dfe7;transform:scaleX(0.9217);transform-origin:0 0;">97 ms</div><svg style="position:absolute;left:868.8px;top:142.72px;overflow:visible;" width="11" height="10" viewBox="0 0 11 10"><path d="M3.7,0.6 L2.1,2 L2.1,3.5 L0.7,4.5 L2.1,5.5 L2.1,7 L3.7,8.4 M7.3,0.6 L8.9,2 L8.9,3.5 L10.3,4.5 L8.9,5.5 L8.9,7 L7.3,8.4" fill="none" stroke="#e8844a" stroke-width="1.2" stroke-linejoin="round"/><circle cx="5.5" cy="2.6" r="0.85" fill="#e8844a"/><path d="M5.5,4.3 V7.2" stroke="#e8844a" stroke-width="1.3"/></svg><div id="rn3" style="position:absolute;left:883.8px;top:144.00px;font-size:10.0px;line-height:10.0px;color:#e2dfe7;font-weight:400;letter-spacing:0.000px;white-space:nowrap;-webkit-text-stroke:0.2px #e2dfe7;transform:scaleX(0.9220);transform-origin:0 0;">mutate?k=recs_count_1_</div><div id="rm3" style="position:absolute;left:1280.9px;top:144.00px;font-size:10.0px;line-height:10.0px;color:#e2dfe7;font-weight:400;letter-spacing:0.000px;white-space:nowrap;-webkit-text-stroke:0.2px #e2dfe7;transform:scaleX(0.8150);transform-origin:0 0;">POST</div><div id="rs3" style="position:absolute;left:1383.0px;top:144.00px;font-size:10.0px;line-height:10.0px;color:#e2dfe7;font-weight:400;letter-spacing:0.000px;white-space:nowrap;-webkit-text-stroke:0.2px #e2dfe7;transform:scaleX(0.9227);transform-origin:0 0;">200</div><div id="rt3" style="position:absolute;left:1665.7px;top:144.00px;font-size:10.0px;line-height:10.0px;color:#e2dfe7;font-weight:400;letter-spacing:0.000px;white-space:nowrap;-webkit-text-stroke:0.2px #e2dfe7;transform:scaleX(0.9270);transform-origin:0 0;">502 ms</div><svg style="position:absolute;left:868.8px;top:159.55999999999997px;overflow:visible;" width="11" height="10" viewBox="0 0 11 10"><path d="M3.7,0.6 L2.1,2 L2.1,3.5 L0.7,4.5 L2.1,5.5 L2.1,7 L3.7,8.4 M7.3,0.6 L8.9,2 L8.9,3.5 L10.3,4.5 L8.9,5.5 L8.9,7 L7.3,8.4" fill="none" stroke="#e8844a" stroke-width="1.2" stroke-linejoin="round"/><circle cx="5.5" cy="2.6" r="0.85" fill="#e8844a"/><path d="M5.5,4.3 V7.2" stroke="#e8844a" stroke-width="1.3"/></svg><div id="rn4" style="position:absolute;left:883.8px;top:160.01px;font-size:10.0px;line-height:10.0px;color:#e2dfe7;font-weight:400;letter-spacing:0.000px;white-space:nowrap;-webkit-text-stroke:0.2px #e2dfe7;transform:scaleX(0.9220);transform-origin:0 0;">mutate?k=recs_count_1_</div><div id="rm4" style="position:absolute;left:1280.9px;top:160.01px;font-size:10.0px;line-height:10.0px;color:#e2dfe7;font-weight:400;letter-spacing:0.000px;white-space:nowrap;-webkit-text-stroke:0.2px #e2dfe7;transform:scaleX(0.8150);transform-origin:0 0;">POST</div><div id="rs4" style="position:absolute;left:1383.0px;top:160.01px;font-size:10.0px;line-height:10.0px;color:#e2dfe7;font-weight:400;letter-spacing:0.000px;white-space:nowrap;-webkit-text-stroke:0.2px #e2dfe7;transform:scaleX(0.9227);transform-origin:0 0;">200</div><div id="rt4" style="position:absolute;left:1666.2px;top:160.01px;font-size:10.0px;line-height:10.0px;color:#e2dfe7;font-weight:400;letter-spacing:0.000px;white-space:nowrap;-webkit-text-stroke:0.2px #e2dfe7;transform:scaleX(0.9115);transform-origin:0 0;">48.06 s</div><svg style="position:absolute;left:1600px;top:170px;overflow:visible;" width="80" height="70" viewBox="0 0 80 70"><path d="M8.4,61.8 L70,10.6" stroke="#ff0000" stroke-width="2.9" stroke-linecap="round"/><path d="M74.1,6.1 L60.3,12.3 L66.2,18.2 Z" fill="#ff0000" stroke="#ff0000" stroke-width="1.5" stroke-linejoin="round"/></svg>
</div></body></html>
